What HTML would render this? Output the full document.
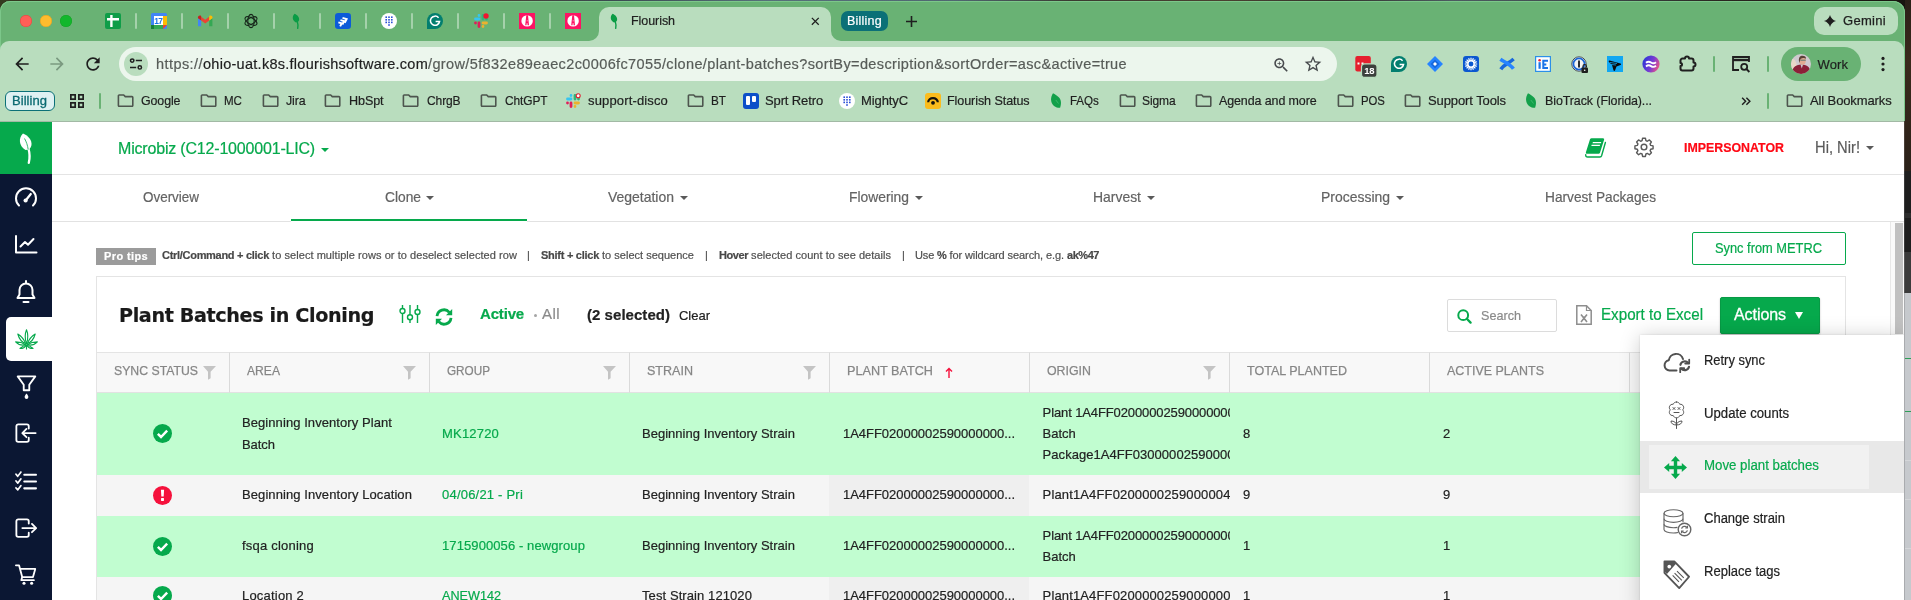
<!DOCTYPE html>
<html lang="en">
<head>
<meta charset="utf-8">
<title>Flourish</title>
<style>
*{box-sizing:border-box;margin:0;padding:0}
html,body{width:1911px;height:600px;overflow:hidden}
body{position:relative;background:#1c1a15;font-family:"Liberation Sans",sans-serif;color:#1f1f1f}
.abs,.t{position:absolute}
.t{white-space:nowrap;line-height:1;-webkit-text-stroke-width:.2px}
svg{position:absolute;overflow:visible}
/* ---------- browser chrome ---------- */
#desk-top{left:0;top:0;width:1911px;height:12px;background:linear-gradient(90deg,#343a20 0,#2d2c22 12%,#5a4a38 20%,#4a4436 26%,#3a4a50 32%,#56707a 40%,#4f6670 50%,#3a3a30 56%,#4a4030 64%,#33342c 70%,#4c5a60 76%,#3c4648 84%,#2a2620 90%,#17140f 100%)}
#desk-right{left:1905px;top:0;width:6px;height:600px;background:linear-gradient(180deg,#2a2018 0,#3a2a1c 60px,#2b2119 171px,#1e1e1e 171px,#1e1e1e 213px,#2d2d2d 213px,#2d2d2d 218px,#1e1e1e 218px,#1e1e1e 252px,#3b3b3b 252px,#3b3b3b 293px,#c6c9cd 293px,#c6c9cd 358px,#2e9e57 358px,#2e9e57 359px,#c6c9cd 359px,#c6c9cd 411px,#2e9e57 411px,#2e9e57 412px,#c6c9cd 412px,#c6c9cd 460px,#d4d6d9 460px,#d4d6d9 461px,#c6c9cd 461px,#c6c9cd 499px,#d4d6d9 499px,#d4d6d9 500px,#c6c9cd 500px,#c6c9cd 548px,#d4d6d9 548px,#d4d6d9 549px,#c6c9cd 549px);border-left:1px solid transparent}
#desk-edge{left:1904px;top:121px;width:1px;height:479px;background:linear-gradient(180deg,#4a4038 0,#4a4038 50px,#3a3a3a 50px,#3a3a3a 131px,#555 131px,#555 172px,#a9abae 172px);z-index:9}
#win{will-change:transform;left:0;top:1px;width:1905px;box-shadow:inset 0 1px 0 0 #7cc78a,inset -1px 0 0 0 #7cc78a,inset 1px 0 0 0 #7cc78a;height:599px;background:#69b274;border-radius:10px 12px 0 0;overflow:hidden}
#toolbar{left:0;top:40px;width:1904px;height:80px;background:#b9ddbe;border-radius:9px 9px 0 0}
#tab-active{left:599px;top:6px;width:232px;height:40px;background:#b9ddbe;border-radius:10px 10px 0 0}
.tabsep{width:2px;height:16px;top:12px;background:#a5d1ab;border-radius:1px}
#omni{left:119px;top:46px;width:1218px;height:34px;border-radius:17px;background:#ecf6ed}
.bm{font-size:13px;color:#1f1f1f;top:93px;letter-spacing:-.1px}
/* ---------- page ---------- */
#page{left:0;top:120px;width:1904px;height:480px;background:#fff;overflow:hidden}
#side{left:0;top:0;width:52px;height:480px;background:#0b1733}
#logo{left:0;top:1px;width:52px;height:52px;background:#06a94c}
#topline{left:0;top:0;width:1904px;height:1px;background:#a2b9a5;z-index:5}

/* page text */
.hd{left:52px;top:0;width:1852px;height:54px;border-bottom:1px solid #e4e4e4;background:#fff}
.nav{left:52px;top:54px;width:1852px;height:47px;border-bottom:1px solid #e2e2e2;background:#fff}
.nt{font-size:14.500px;color:#636363;top:69px}
.caret{width:0;height:0;border-left:4px solid transparent;border-right:4px solid transparent;border-top:4px solid #5a5a5a}
.tip{font-size:11px;color:#505050;top:129px}
.tip b{font-weight:700;color:#484848}
#card{left:96px;top:155px;width:1750px;height:400px;border:1px solid #e4e4e4;background:#fff}
.th{top:231px;height:41px;background:#f8f8f8;border-top:1px solid #e4e4e4;border-bottom:1px solid #e2e2e2;border-right:1px solid #dadada}
.tht{font-size:13px;color:#868686;top:243.300px;-webkit-text-stroke:.25px #868686}
.row{left:97px;width:1749px}
.sel{background:#c1fdd0}
.un{background:#f5f5f5}
.c{font-size:13px;color:#222;}
.mi{font-size:14px;color:#222}
.g{color:#06a94c}
</style>
</head>
<body>
<div id="desk-top" class="abs"></div>
<div id="desk-right" class="abs"></div>
<div id="desk-edge" class="abs"></div>
<div id="win" class="abs">
  <div id="toolbar" class="abs"></div>
  <div id="tab-active" class="abs"></div>
  <div id="omni" class="abs"></div>
  <!-- traffic lights -->
  <div class="abs" style="left:20px;top:14px;width:12px;height:12px;border-radius:50%;background:#fe5f57;box-shadow:inset 0 0 0 .5px #e2463f"></div>
  <div class="abs" style="left:40px;top:14px;width:12px;height:12px;border-radius:50%;background:#febc2e;box-shadow:inset 0 0 0 .5px #dfa123"></div>
  <div class="abs" style="left:60px;top:14px;width:12px;height:12px;border-radius:50%;background:#12b72c;box-shadow:inset 0 0 0 .5px #14a424"></div>
  <!-- tab separators -->
  <div class="abs tabsep" style="left:135px"></div><div class="abs tabsep" style="left:181px"></div><div class="abs tabsep" style="left:227px"></div><div class="abs tabsep" style="left:273px"></div><div class="abs tabsep" style="left:319px"></div><div class="abs tabsep" style="left:365px"></div><div class="abs tabsep" style="left:411px"></div><div class="abs tabsep" style="left:457px"></div><div class="abs tabsep" style="left:503px"></div><div class="abs tabsep" style="left:549px"></div>
  <!-- favicons (16px, centred y=20 in win coords) -->
  <svg style="left:105px;top:12px" width="16" height="16" viewBox="0 0 16 16"><rect width="16" height="16" rx="2" fill="#0f9d48"/><path d="M5.200 2h2.400v3h6.400v2.400H7.600V14H5.200V7.400H2V5h3.200z" fill="#fff"/></svg>
  <svg style="left:151px;top:12px" width="16" height="16" viewBox="0 0 16 16"><rect width="16" height="16" rx="1.5" fill="#4285f4"/><rect x="12" y="3" width="4" height="9" fill="#fbbc04"/><rect x="3" y="12" width="9" height="4" fill="#34a853"/><path d="M12 12h4l-4 4z" fill="#ea4335"/><rect x="0" y="12" width="3" height="4" fill="#188038"/><rect x="3" y="3" width="9" height="9" fill="#fff"/><text x="7.300" y="10.800" font-size="8.400" font-weight="700" text-anchor="middle" fill="#1a73e8" font-family="Liberation Sans,sans-serif" letter-spacing="-.5">17</text></svg>
  <svg style="left:197px;top:12px" width="16" height="16" viewBox="0 0 16 16"><path d="M1 13.200V5.200l3.200 2.400v5.600z" fill="#4285f4"/><path d="M12.200 13.200V7.600l3.200-2.400v8z" fill="#34a853"/><path d="M4.200 7.600 8.200 10.600l4-3V3.700l-4 3-4-3z" fill="#ea4335"/><path d="M1 5.200V4.300C1 2.700 2.800 1.900 4 2.800l.2.900v3.900z" fill="#c5221f"/><path d="M15.400 5.200V4.300c0-1.600-1.800-2.400-3-1.500l-.2.900v3.900z" fill="#fbbc04"/></svg>
  <svg style="left:243px;top:12px" width="16" height="16" viewBox="0 0 16 16" fill="none" stroke="#16251a" stroke-width="1.15"><ellipse cx="8" cy="8" rx="3.2" ry="6.6"/><ellipse cx="8" cy="8" rx="3.2" ry="6.6" transform="rotate(60 8 8)"/><ellipse cx="8" cy="8" rx="3.2" ry="6.6" transform="rotate(120 8 8)"/></svg>
  <svg style="left:289px;top:12px" width="16" height="16" viewBox="0 0 16 16"><path d="M5.600 .8C3 3.300 3 7.300 6.900 9.600c1.700 0 2.900-.9 3.200-2.500C10.600 4.500 8.600 2 5.600 .8z" fill="#0a9c45"/><path d="M8.300 8.600c.8 2.400 1 4.400.4 6.800" stroke="#0a9c45" stroke-width="1.400" fill="none" stroke-linecap="round"/></svg>
  <svg style="left:335px;top:12px" width="16" height="16" viewBox="0 0 16 16"><rect width="16" height="16" rx="3.200" fill="#0c5bd8"/><g fill="none" stroke="#fff" stroke-width="1.900" stroke-linejoin="miter" transform="rotate(-24 8 8)"><path d="M3.200 7.400l2.730 2.200l-2.730 2.200"/><path d="M6 6.200l2.980 2.400l-2.980 2.400"/><path d="M8.800 5l3.350 2.700l-3.350 2.700"/></g></svg>
  <svg style="left:381px;top:12px" width="16" height="16" viewBox="0 0 16 16"><circle cx="8" cy="8" r="8" fill="#fff"/><g fill="#2a4fd7"><rect x="4.4" y="3.4" width="1.600" height="1.600"/><rect x="7.2" y="3.4" width="1.600" height="1.600"/><rect x="10.0" y="3.4" width="1.600" height="1.600"/><rect x="4.4" y="6.0" width="1.600" height="1.600"/><rect x="7.2" y="6.0" width="1.600" height="1.600"/><rect x="10.0" y="6.0" width="1.600" height="1.600"/><rect x="4.4" y="8.6" width="1.600" height="1.600"/><rect x="7.2" y="8.6" width="1.600" height="1.600"/><rect x="10.0" y="8.6" width="1.600" height="1.600"/><rect x="7.200" y="11.200" width="1.600" height="1.600"/></g></svg>
  <svg style="left:427px;top:12px" width="16" height="16" viewBox="0 0 16 16"><path d="M8 0a8 8 0 1 1 0 16H0V8a8 8 0 0 1 8-8z" fill="#027e6f"/><path d="M11.600 4.800A4.600 4.600 0 1 0 12.600 8.400H8.600" stroke="#fff" stroke-width="1.500" fill="none"/></svg>
  <svg style="left:473px;top:12px" width="16" height="16" viewBox="0 0 16 16"><g stroke-width="2.800" stroke-linecap="round" fill="none"><path d="M6 2.500v.01M2.500 6h3.500" stroke="#36c5f0"/><path d="M10 2.500v3.500M13.500 6v.01" stroke="#2eb67d"/><path d="M10 10h3.500M10 13.500v.01" stroke="#ecb22e"/><path d="M6 10v3.500M2.500 10v.01" stroke="#e01e5a"/></g><circle cx="13" cy="3" r="2.700" fill="#f0142f"/></svg>
  <svg style="left:519px;top:12px" width="16" height="16" viewBox="0 0 16 16"><rect width="16" height="16" fill="#fd1363"/><circle cx="8.100" cy="7.900" r="5.700" fill="#fff"/><path d="M7.300 2.200h1.700l1 10h-1.400l-.3-2.200h-.5l-.3 2.200H6.200z" fill="#fd1363"/><rect x="7.750" y="7.400" width=".8" height=".9" fill="#fff"/></svg>
  <svg style="left:565px;top:12px" width="16" height="16" viewBox="0 0 16 16"><rect width="16" height="16" fill="#fd1363"/><circle cx="8.100" cy="7.900" r="5.700" fill="#fff"/><path d="M7.300 2.200h1.700l1 10h-1.400l-.3-2.200h-.5l-.3 2.200H6.200z" fill="#fd1363"/><rect x="7.750" y="7.400" width=".8" height=".9" fill="#fff"/></svg>
  <!-- active tab curves + content -->
  <svg style="left:589px;top:30px" width="10" height="10" viewBox="0 0 10 10"><path d="M10 0v10H0A10 10 0 0 0 10 0z" fill="#b9ddbe"/></svg>
  <svg style="left:831px;top:30px" width="10" height="10" viewBox="0 0 10 10"><path d="M0 0v10h10A10 10 0 0 1 0 0z" fill="#b9ddbe"/></svg>
  <svg style="left:607px;top:12px" width="16" height="16" viewBox="0 0 16 16"><path d="M5.600 .8C3 3.300 3 7.300 6.900 9.600c1.700 0 2.900-.9 3.200-2.500C10.600 4.500 8.600 2 5.600 .8z" fill="#0a9c45"/><path d="M8.300 8.600c.8 2.400 1 4.400.4 6.800" stroke="#0a9c45" stroke-width="1.400" fill="none" stroke-linecap="round"/></svg>
  <span class="t fit" style="left:631px;top:14px;font-size:12.500px;color:#1f1f1f;letter-spacing:-0.059px;--w:44px">Flourish</span>
  <svg style="left:810.700px;top:15.700px" width="8.600" height="8.600" viewBox="0 0 10 10"><path d="M1 1l8 8M9 1l-8 8" stroke="#1f1f1f" stroke-width="1.500" fill="none"/></svg>
  <div class="abs" style="left:841px;top:10px;width:47px;height:20px;border-radius:7px;background:#0b7077"></div>
  <span class="t fit" style="left:847px;top:14px;font-size:12.500px;color:#fff;letter-spacing:0.234px;--w:35px">Billing</span>
  <svg style="left:906px;top:15px" width="11" height="11" viewBox="0 0 11 11"><path d="M5.500 0v11M0 5.500h11" stroke="#1f1f1f" stroke-width="1.600" fill="none"/></svg>
  <!-- gemini -->
  <div class="abs" style="left:1814px;top:6px;width:84px;height:28px;border-radius:10px;background:#b9ddbe"></div>
  <svg style="left:1824px;top:14px" width="12" height="12" viewBox="0 0 12 12"><path d="M6 0Q7.300 4.700 12 6 7.300 7.300 6 12 4.700 7.300 0 6 4.700 4.700 6 0z" fill="#1f1f1f"/></svg>
  <span class="t fit" style="left:1843px;top:13px;font-size:13px;color:#1f1f1f;-webkit-text-stroke:.25px #1f1f1f;letter-spacing:0.302px;--w:43px">Gemini</span>
  <!-- nav buttons (win coords: y centre 63) -->
  <svg style="left:12px;top:53px" width="20" height="20" viewBox="0 0 24 24"><path d="M20 11H7.830l5.590-5.590L12 4l-8 8 8 8 1.410-1.410L7.830 13H20v-2z" fill="#1f1f1f"/></svg>
  <svg style="left:47px;top:53px" width="20" height="20" viewBox="0 0 24 24"><path d="M12 4l-1.410 1.410L16.170 11H4v2h12.170l-5.580 5.590L12 20l8-8z" fill="#7b9a80"/></svg>
  <svg style="left:83px;top:53px" width="20" height="20" viewBox="0 0 24 24"><path d="M17.650 6.350C16.200 4.900 14.210 4 12 4c-4.420 0-7.990 3.580-7.990 8s3.570 8 7.990 8c3.730 0 6.840-2.550 7.730-6h-2.080c-.82 2.330-3.040 4-5.650 4-3.310 0-6-2.690-6-6s2.690-6 6-6c1.660 0 3.140.69 4.220 1.780L13 11h7V4l-2.350 2.350z" fill="#1f1f1f"/></svg>
  <!-- omnibox contents -->
  <div class="abs" style="left:124px;top:51px;width:24px;height:24px;border-radius:50%;background:#b9ddbe"></div>
  <svg style="left:129px;top:56px" width="14" height="14" viewBox="0 0 14 14" fill="none" stroke="#1f1f1f" stroke-width="1.500"><circle cx="3.200" cy="3.600" r="1.700"/><path d="M6.800 3.600H13"/><circle cx="10.800" cy="10.400" r="1.700"/><path d="M1 10.400H7.200"/></svg>
  <span class="t" style="left:156px;top:56px;font-size:14.500px;color:#575c58"><span class="fit" style="letter-spacing:0.434px;--w:47px">https://</span><span class="fit" style="color:#1f1f1f;letter-spacing:0.273px;--w:225px">ohio-uat.k8s.flourishsoftware.com</span><span class="fit" style="letter-spacing:0.379px;--w:699px">/grow/5f832e89eaec2c0006fc7055/clone/plant-batches?sortBy=description&amp;sortOrder=asc&amp;active=true</span></span>
  <svg style="left:1272px;top:54.500px" width="18.500" height="18.500" viewBox="0 0 24 24"><path d="M15.500 14h-.79l-.28-.27C15.410 12.590 16 11.110 16 9.500 16 5.910 13.090 3 9.500 3S3 5.910 3 9.500 5.910 16 9.500 16c1.610 0 3.090-.59 4.230-1.570l.27.280v.79l5 4.990L20.490 19l-4.990-5zm-6 0C7.010 14 5 11.990 5 9.500S7.010 5 9.500 5 14 7.010 14 9.500 11.990 14 9.500 14zM12 10h-2v2H9v-2H7V9h2V7h1v2h2v1z" fill="#474a4d"/></svg>
  <svg style="left:1303px;top:53px" width="20" height="20" viewBox="0 0 24 24"><path d="M22 9.240l-7.190-.62L12 2 9.190 8.630 2 9.240l5.460 4.730L5.820 21 12 17.270 18.180 21l-1.630-7.030L22 9.240zM12 15.400l-3.760 2.270 1-4.280-3.320-2.880 4.380-.38L12 6.100l1.710 4.040 4.380.38-3.320 2.880 1 4.280L12 15.400z" fill="#474a4d"/></svg>
  <!-- extensions -->
  <svg style="left:1354px;top:54px" width="26" height="24" viewBox="0 0 26 24"><rect x="1.300" y=".9" width="15.500" height="15.500" rx="2" fill="#e5202e"/><path d="M3.500 8.500h2M7.500 8.500h2" stroke="#fff" stroke-width="1.800"/><rect x="7.500" y="8.900" width="15.500" height="13.500" rx="3.200" fill="#3c403d" stroke="#b9ddbe" stroke-width="1.200"/><text x="15.300" y="19" font-size="9.500" font-weight="700" text-anchor="middle" fill="#fff" font-family="Liberation Sans,sans-serif" letter-spacing="-.3">18</text></svg>
  <svg style="left:1391px;top:55px" width="16" height="16" viewBox="0 0 16 16"><path d="M8 0a8 8 0 1 1 0 16H0V8a8 8 0 0 1 8-8z" fill="#027e6f"/><path d="M11.600 4.800A4.600 4.600 0 1 0 12.600 8.400H8.600" stroke="#fff" stroke-width="1.500" fill="none"/></svg>
  <svg style="left:1427px;top:55px" width="16" height="16" viewBox="0 0 16 16"><path d="M8 0l8 8-8 8-8-8z" fill="#2684ff"/><path d="M8 3.500 12.500 8 8 12.500 3.500 8z" fill="#1868db"/><path d="M8 6l2 2-2 2-2-2z" fill="#fff"/></svg>
  <svg style="left:1463px;top:55px" width="16" height="16" viewBox="0 0 16 16"><rect width="16" height="16" rx="3" fill="#0b57d0"/><circle cx="8" cy="8" r="3.200" fill="none" stroke="#fff" stroke-width="1.500"/><g stroke="#fff" stroke-width="1.200"><path d="M8 1.800v2.600M8 11.600v2.600M1.800 8h2.600M11.600 8h2.600M3.600 3.600l1.900 1.900M10.500 10.500l1.900 1.900M12.400 3.600l-1.900 1.900M5.500 10.500l-1.900 1.900M5.600 2.300l1 2.400M9.400 11.300l1 2.400M13.700 5.600l-2.400 1M4.700 9.400l-2.400 1M10.400 2.300l-1 2.400M6.600 11.300l-1 2.400M13.700 10.400l-2.400-1M4.700 6.600l-2.400-1"/></g></svg>
  <svg style="left:1499px;top:55px" width="16" height="16" viewBox="0 0 16 16" fill="none" stroke-width="3.600"><path d="M1.800 13.200C5 8.500 9.500 7.500 14.600 3" stroke="#1868db"/><path d="M1.400 3.200C6 6.500 11 8 14.400 12.800" stroke="#2684ff"/></svg>
  <svg style="left:1535px;top:55px" width="16" height="16" viewBox="0 0 16 16"><rect x=".6" y=".6" width="14.800" height="14.800" fill="#fff" stroke="#2b8fe8" stroke-width="1.200"/><circle cx="4.600" cy="4.200" r="1.300" fill="#e8253a"/><rect x="3.500" y="6.200" width="2.200" height="6.600" fill="#1b74e8"/><path d="M13 4.800H8.300v7.200H13M8.300 8.400h3" stroke="#1b74e8" stroke-width="2" fill="none"/></svg>
  <svg style="left:1570px;top:54px" width="20" height="20" viewBox="0 0 20 20"><circle cx="9" cy="9" r="7.200" fill="#fff" stroke="#4a4f55" stroke-width="1"/><circle cx="9" cy="9" r="5.600" fill="#f4f4f4" stroke="#1a66d6" stroke-width="1.800"/><rect x="8" y="5.200" width="2" height="7.600" rx="1" fill="#2a2f36"/><rect x="11.500" y="12.500" width="6.500" height="5.500" rx="1" fill="#1f1f1f"/><path d="M13 12.500v-1.300a1.700 1.700 0 0 1 3.400 0v1.300" stroke="#1f1f1f" stroke-width="1.200" fill="none"/><circle cx="14.700" cy="15.200" r=".8" fill="#fff"/></svg>
  <svg style="left:1607px;top:55px" width="16" height="16" viewBox="0 0 16 16"><rect width="16" height="16" fill="#12a7f2"/><path d="M2.500 4.500 13.500 7.500c.8.200.8 1.200 0 1.500L9.500 10.500 8 14.500c-.3.700-1.200.6-1.400 0L5 9 2 6c-.6-.6-.2-1.700.5-1.500z" fill="#0b0b0b"/><path d="M3 6.500l7 1M4 8.500l5 .5" stroke="#12a7f2" stroke-width=".8"/></svg>
  <svg style="left:1642px;top:54px" width="18" height="18" viewBox="0 0 18 18"><defs><linearGradient id="pg" x1="0" y1=".3" x2="1" y2=".7"><stop offset="0" stop-color="#2a35d8"/><stop offset=".55" stop-color="#7a3bd2"/><stop offset="1" stop-color="#f4567e"/></linearGradient></defs><circle cx="9" cy="9" r="8.600" fill="url(#pg)"/><path d="M4 7.800c1.800-1.500 3.200-1.500 5-.3s3.200 1.200 5-.3M4 11.400c1.800-1.500 3.200-1.500 5-.3s3.200 1.200 5-.3" stroke="#fff" stroke-width="1.900" fill="none"/></svg>
  <svg style="left:1677.500px;top:52px" width="20" height="20" viewBox="0 0 20 20" fill="none" stroke="#1f1f1f" stroke-width="2" stroke-linejoin="round"><path d="M4.500 5.500H7A2 2 0 0 1 11 5.500H13.500A2 2 0 0 1 15.500 7.500V9.500A2 2 0 0 1 15.500 13.500V15.500A2 2 0 0 1 13.500 17.500H4.500A2 2 0 0 1 2.500 15.500V13A1.500 1.500 0 0 0 2.500 10V7.500A2 2 0 0 1 4.500 5.500Z"/></svg>
  <div class="abs" style="left:1713px;top:55px;width:2px;height:16px;background:#69b274;border-radius:1px"></div>
  <svg style="left:1731px;top:54px" width="20" height="18" viewBox="0 0 20 18" fill="none" stroke="#1f1f1f" stroke-width="1.800"><path d="M8 15H2V2h16v5"/><path d="M2 5h16" stroke-width="2.400"/><circle cx="13.200" cy="11.800" r="3"/><path d="M15.400 14l3 3"/></svg>
  <div class="abs" style="left:1767px;top:55px;width:2px;height:16px;background:#69b274;border-radius:1px"></div>
  <!-- profile pill -->
  <div class="abs" style="left:1781px;top:46px;width:80px;height:34px;border-radius:17px;background:#69b274"></div>
  <svg style="left:1791px;top:53px" width="20" height="20" viewBox="0 0 20 20"><defs><clipPath id="avc"><circle cx="10" cy="10" r="10"/></clipPath></defs><g clip-path="url(#avc)"><rect width="20" height="20" fill="#cfc9cf"/><path d="M0 4c2 0 5 2 6 8L0 16z" fill="#e9d6c8"/><path d="M1 20c0-6 3-9.500 9.500-9.500S19.500 14 19.500 20z" fill="#8c2038"/><path d="M9.500 10.500l1.300 4 1.200-4z" fill="#c9cdd6"/><ellipse cx="11.500" cy="6.500" rx="3.300" ry="4.200" fill="#e2ab92"/><path d="M8 7.500C7.500 3.500 9 1.800 11.500 1.800c2.200 0 3.600 1.200 3.600 3-1.500-1-3.800-1-5.300 0C9.200 5.600 8.800 6.500 8.600 9z" fill="#5a4038"/><path d="M9.300 5.600h5.400v1.300H9.300z" fill="#6d7f78" opacity=".8"/></g></svg>
  <span class="t fit" style="left:1817.500px;top:56.700px;font-size:13px;color:#1f1f1f;letter-spacing:0.098px;--w:30.500px">Work</span>
  <svg style="left:1881px;top:54px" width="4" height="18" viewBox="0 0 4 18"><circle cx="2" cy="3.400" r="1.600" fill="#1f1f1f"/><circle cx="2" cy="9" r="1.600" fill="#1f1f1f"/><circle cx="2" cy="14.600" r="1.600" fill="#1f1f1f"/></svg>
  <!-- bookmarks bar (win coords: y centre 99.5) -->
  <div class="abs" style="left:5px;top:90px;width:50px;height:20px;border-radius:6px;background:#dff1f2;border:1px solid #0b7077"></div>
  <span class="t fit" style="left:12px;top:93px;font-size:13px;color:#0b6a72;-webkit-text-stroke:.3px #0b6a72;letter-spacing:0.045px;--w:35px">Billing</span>
  <svg style="left:70px;top:93px" width="14" height="14" viewBox="0 0 14 14" fill="none" stroke="#1f1f1f" stroke-width="1.700"><rect x=".85" y=".85" width="4.300" height="4.300"/><rect x="8.850" y=".85" width="4.300" height="4.300"/><rect x=".85" y="8.850" width="4.300" height="4.300"/><rect x="8.850" y="8.850" width="4.300" height="4.300"/></svg>
  <div class="abs" style="left:99px;top:92px;width:2px;height:16px;background:#69b274;border-radius:1px"></div>
  <svg style="left:115.9px;top:90.400px" width="19.200" height="19.200" viewBox="0 0 24 24"><path d="M9.170 6l2 2H20v10H4V6h5.170M10 4H4c-1.100 0-1.990.9-1.990 2L2 18c0 1.100.9 2 2 2h16c1.100 0 2-.9 2-2V8c0-1.100-.9-2-2-2h-8l-2-2z" fill="#4d554e"/></svg><span class="t bm fit" style="left:141px;transform:scaleX(0.9542);transform-origin:0 0;--w:40px">Google</span>
  <svg style="left:198.9px;top:90.400px" width="19.200" height="19.200" viewBox="0 0 24 24"><path d="M9.170 6l2 2H20v10H4V6h5.170M10 4H4c-1.100 0-1.990.9-1.990 2L2 18c0 1.100.9 2 2 2h16c1.100 0 2-.9 2-2V8c0-1.100-.9-2-2-2h-8l-2-2z" fill="#4d554e"/></svg><span class="t bm fit" style="left:224px;transform:scaleX(0.8903);transform-origin:0 0;--w:18px">MC</span>
  <svg style="left:260.9px;top:90.400px" width="19.200" height="19.200" viewBox="0 0 24 24"><path d="M9.170 6l2 2H20v10H4V6h5.170M10 4H4c-1.100 0-1.990.9-1.990 2L2 18c0 1.100.9 2 2 2h16c1.100 0 2-.9 2-2V8c0-1.100-.9-2-2-2h-8l-2-2z" fill="#4d554e"/></svg><span class="t bm fit" style="left:286px;transform:scaleX(0.9545);transform-origin:0 0;--w:20px">Jira</span>
  <svg style="left:322.9px;top:90.400px" width="19.200" height="19.200" viewBox="0 0 24 24"><path d="M9.170 6l2 2H20v10H4V6h5.170M10 4H4c-1.100 0-1.990.9-1.990 2L2 18c0 1.100.9 2 2 2h16c1.100 0 2-.9 2-2V8c0-1.100-.9-2-2-2h-8l-2-2z" fill="#4d554e"/></svg><span class="t bm fit" style="left:349px;transform:scaleX(0.9684);transform-origin:0 0;--w:35px">HbSpt</span>
  <svg style="left:400.9px;top:90.400px" width="19.200" height="19.200" viewBox="0 0 24 24"><path d="M9.170 6l2 2H20v10H4V6h5.170M10 4H4c-1.100 0-1.990.9-1.990 2L2 18c0 1.100.9 2 2 2h16c1.100 0 2-.9 2-2V8c0-1.100-.9-2-2-2h-8l-2-2z" fill="#4d554e"/></svg><span class="t bm fit" style="left:427px;transform:scaleX(0.9224);transform-origin:0 0;--w:34px">ChrgB</span>
  <svg style="left:478.9px;top:90.400px" width="19.200" height="19.200" viewBox="0 0 24 24"><path d="M9.170 6l2 2H20v10H4V6h5.170M10 4H4c-1.100 0-1.990.9-1.990 2L2 18c0 1.100.9 2 2 2h16c1.100 0 2-.9 2-2V8c0-1.100-.9-2-2-2h-8l-2-2z" fill="#4d554e"/></svg><span class="t bm fit" style="left:505px;transform:scaleX(0.9155);transform-origin:0 0;--w:43px">ChtGPT</span>
  <svg style="left:685.9px;top:90.400px" width="19.200" height="19.200" viewBox="0 0 24 24"><path d="M9.170 6l2 2H20v10H4V6h5.170M10 4H4c-1.100 0-1.990.9-1.990 2L2 18c0 1.100.9 2 2 2h16c1.100 0 2-.9 2-2V8c0-1.100-.9-2-2-2h-8l-2-2z" fill="#4d554e"/></svg><span class="t bm fit" style="left:711px;transform:scaleX(0.9023);transform-origin:0 0;--w:15px">BT</span>
  <svg style="left:1117.9px;top:90.400px" width="19.200" height="19.200" viewBox="0 0 24 24"><path d="M9.170 6l2 2H20v10H4V6h5.170M10 4H4c-1.100 0-1.990.9-1.990 2L2 18c0 1.100.9 2 2 2h16c1.100 0 2-.9 2-2V8c0-1.100-.9-2-2-2h-8l-2-2z" fill="#4d554e"/></svg><span class="t bm fit" style="left:1142px;transform:scaleX(0.9224);transform-origin:0 0;--w:34px">Sigma</span>
  <svg style="left:1193.9px;top:90.400px" width="19.200" height="19.200" viewBox="0 0 24 24"><path d="M9.170 6l2 2H20v10H4V6h5.170M10 4H4c-1.100 0-1.990.9-1.990 2L2 18c0 1.100.9 2 2 2h16c1.100 0 2-.9 2-2V8c0-1.100-.9-2-2-2h-8l-2-2z" fill="#4d554e"/></svg><span class="t bm fit" style="left:1219px;transform:scaleX(0.9578);transform-origin:0 0;--w:99px">Agenda and more</span>
  <svg style="left:1335.9px;top:90.400px" width="19.200" height="19.200" viewBox="0 0 24 24"><path d="M9.170 6l2 2H20v10H4V6h5.170M10 4H4c-1.100 0-1.990.9-1.990 2L2 18c0 1.100.9 2 2 2h16c1.100 0 2-.9 2-2V8c0-1.100-.9-2-2-2h-8l-2-2z" fill="#4d554e"/></svg><span class="t bm fit" style="left:1361px;transform:scaleX(0.8737);transform-origin:0 0;--w:24px">POS</span>
  <svg style="left:1402.9px;top:90.400px" width="19.200" height="19.200" viewBox="0 0 24 24"><path d="M9.170 6l2 2H20v10H4V6h5.170M10 4H4c-1.100 0-1.990.9-1.990 2L2 18c0 1.100.9 2 2 2h16c1.100 0 2-.9 2-2V8c0-1.100-.9-2-2-2h-8l-2-2z" fill="#4d554e"/></svg><span class="t bm fit" style="left:1428px;letter-spacing:-0.097px;--w:78px">Support Tools</span>
  <svg style="left:1784.9px;top:90.400px" width="19.200" height="19.200" viewBox="0 0 24 24"><path d="M9.170 6l2 2H20v10H4V6h5.170M10 4H4c-1.100 0-1.990.9-1.990 2L2 18c0 1.100.9 2 2 2h16c1.100 0 2-.9 2-2V8c0-1.100-.9-2-2-2h-8l-2-2z" fill="#4d554e"/></svg><span class="t bm fit" style="left:1810px;letter-spacing:-0.121px;--w:81.500px">All Bookmarks</span>
  <svg style="left:565px;top:92px" width="16" height="16" viewBox="0 0 16 16"><g stroke-width="2.800" stroke-linecap="round" fill="none"><path d="M6 2.500v.01M2.500 6h3.500" stroke="#36c5f0"/><path d="M10 2.500v3.500M13.500 6v.01" stroke="#2eb67d"/><path d="M10 10h3.500M10 13.500v.01" stroke="#ecb22e"/><path d="M6 10v3.500M2.500 10v.01" stroke="#e01e5a"/></g><circle cx="13.200" cy="2.800" r="2" fill="#fff" stroke="#e01e2f" stroke-width="1.100"/></svg><span class="t bm fit" style="left:588px;letter-spacing:0.150px;--w:80px">support-disco</span>
  <svg style="left:743px;top:92px" width="16" height="16" viewBox="0 0 16 16"><rect width="16" height="16" rx="3" fill="#0c4fc9"/><rect x="3" y="3" width="4" height="9" rx="1" fill="#fff"/><rect x="9" y="3" width="4" height="6" rx="1" fill="#fff"/></svg><span class="t bm fit" style="left:765px;letter-spacing:-0.125px;--w:58px">Sprt Retro</span>
  <svg style="left:839px;top:92px" width="16" height="16" viewBox="0 0 16 16"><circle cx="8" cy="8" r="8" fill="#fff"/><g fill="#2a4fd7"><rect x="4.4" y="3.4" width="1.600" height="1.600"/><rect x="7.2" y="3.4" width="1.600" height="1.600"/><rect x="10.0" y="3.4" width="1.600" height="1.600"/><rect x="4.4" y="6.0" width="1.600" height="1.600"/><rect x="7.2" y="6.0" width="1.600" height="1.600"/><rect x="10.0" y="6.0" width="1.600" height="1.600"/><rect x="4.4" y="8.6" width="1.600" height="1.600"/><rect x="7.2" y="8.6" width="1.600" height="1.600"/><rect x="10.0" y="8.6" width="1.600" height="1.600"/><rect x="7.200" y="11.200" width="1.600" height="1.600"/></g></svg><span class="t bm fit" style="left:861px;letter-spacing:-0.098px;--w:47px">MightyC</span>
  <svg style="left:925px;top:92px" width="16" height="16" viewBox="0 0 16 16"><rect width="16" height="16" rx="3" fill="#fbbc1d"/><path d="M3.200 9.200a4.800 4 0 0 1 9.600 0" fill="none" stroke="#16130d" stroke-width="2.200"/><circle cx="8" cy="9.800" r="1.900" fill="#16130d"/></svg><span class="t bm fit" style="left:947px;transform:scaleX(0.9688);transform-origin:0 0;--w:84px">Flourish Status</span>
  <svg style="left:1048px;top:92px" width="16" height="16" viewBox="0 0 16 16"><path d="M5 .2C2.500 4 2 9 6 13c2 1.500 4.500 2 6.100 1.800C13.500 11 13.500 6.500 10.500 4 9 2.500 7 1.200 5 .2z" fill="#13a04a"/><path d="M7.800 7l2.700 3.500" stroke="#4cc27a" stroke-width=".7" fill="none"/></svg><span class="t bm fit" style="left:1070px;transform:scaleX(0.8919);transform-origin:0 0;--w:29px">FAQs</span>
  <svg style="left:1523px;top:92px" width="16" height="16" viewBox="0 0 16 16"><path d="M5 .2C2.500 4 2 9 6 13c2 1.500 4.500 2 6.100 1.800C13.500 11 13.500 6.500 10.500 4 9 2.500 7 1.200 5 .2z" fill="#13a04a"/><path d="M7.800 7l2.700 3.500" stroke="#4cc27a" stroke-width=".7" fill="none"/></svg><span class="t bm fit" style="left:1545px;transform:scaleX(0.9590);transform-origin:0 0;--w:109px">BioTrack (Florida)...</span>
  <svg style="left:1740.500px;top:95.500px" width="10" height="8.500" viewBox="0 0 12 11" fill="none" stroke="#1f1f1f" stroke-width="1.900"><path d="M1 1l4.500 4.500L1 10M6.500 1 11 5.500 6.500 10"/></svg>
  <div class="abs" style="left:1767px;top:92px;width:2px;height:16px;background:#69b274;border-radius:1px"></div>
  <!--CHROME-->
  <div id="page" class="abs">
    <div id="side" class="abs"><div id="logo" class="abs"></div></div>
    <div id="topline" class="abs"></div>
    <!-- sidebar icons (page coords = screen-121) -->
    <svg style="left:19px;top:12px" width="14" height="31" viewBox="0 0 14 31"><path d="M4 .5C-.5 5-.5 12.500 6.500 17c3 0 5.300-1.600 5.900-4.600C13.300 7.500 9.500 2.700 4 .5z" fill="#fff"/><path d="M9.300 15c1.500 5 1.800 9.500.5 14.800" stroke="#fff" stroke-width="2.300" fill="none" stroke-linecap="round"/><path d="M9.200 16.500C8.500 12 7.500 9 5.500 5.500" stroke="#06a94c" stroke-width=".8" fill="none"/></svg>
    <svg style="left:14px;top:65px" width="24" height="22" viewBox="0 0 24 22" fill="none" stroke="#fff" stroke-width="2" stroke-linecap="round"><path d="M5 19.500A10 10 0 1 1 19 19.500"/><path d="M11.800 14.300l5-6.300" stroke-width="2.200"/><circle cx="11.600" cy="14.500" r="2.100" fill="#fff" stroke="none"/></svg>
    <svg style="left:15px;top:114px" width="23" height="19" viewBox="0 0 23 19" fill="none" stroke="#fff" stroke-width="2" stroke-linecap="round" stroke-linejoin="round"><path d="M1 1v16.500h20.500"/><path d="M5.500 11.500l4.500-4.500 3 2.800 5.500-5.800"/></svg>
    <svg style="left:16px;top:159px" width="20" height="24" viewBox="0 0 20 24" fill="none" stroke="#fff" stroke-width="2" stroke-linecap="round" stroke-linejoin="round"><path d="M10 1v1.500"/><path d="M3.500 10a6.500 6.500 0 0 1 13 0v4.500l2 3.500h-17l2-3.500z"/><path d="M7.500 22h5"/></svg>
    <div class="abs" style="left:6px;top:196px;width:46px;height:44px;border-radius:5px 0 0 5px;background:#fff"></div>
    <svg style="left:15px;top:208px" width="23" height="22" viewBox="0 0 23 22" fill="#fff" stroke="#06a94c" stroke-width="1.100" stroke-linejoin="round"><path d="M2.800 5c3.400 2 6 5 7.900 9.600C6.500 13 4 9.600 2.800 5z"/><path d="M20.200 5c-3.400 2-6 5-7.900 9.600C16.500 13 19 9.600 20.200 5z"/><path d="M.6 12.800c3.800.1 7.100 1 10.200 3-3.900.9-7.300 0-10.200-3z"/><path d="M22.400 12.800c-3.800.1-7.100 1-10.200 3 3.900.9 7.300 0 10.200-3z"/><path d="M5 19.500c1.700-1.800 3.800-2.900 6.200-3.300-1.100 2.200-3.200 3.300-6.200 3.300z"/><path d="M18 19.500c-1.700-1.800-3.800-2.900-6.200-3.300 1.100 2.200 3.200 3.300 6.200 3.300z"/><path d="M11.500 .8c1.700 4 1.700 9 0 14.200-1.700-5.200-1.700-10.200 0-14.200z"/><path d="M11.500 16v4.500" fill="none"/></svg>
    <svg style="left:15.500px;top:254px" width="21" height="25" viewBox="0 0 22 27" fill="none" stroke="#fff" stroke-width="2" stroke-linejoin="round"><path d="M1.500 1.500h19l-6.500 9v6h-6v-6z"/><path d="M11 20c1.300 1.800 2 2.800 2 3.800a2 2 0 0 1-4 0c0-1 .7-2 2-3.800z" fill="#fff" stroke="none"/></svg>
    <svg style="left:15px;top:302px" width="22" height="20.200" viewBox="0 0 24 22" fill="none" stroke="#fff" stroke-width="2" stroke-linecap="round" stroke-linejoin="round"><path d="M15 6V3.500a2 2 0 0 0-2-2H3.500a2 2 0 0 0-2 2v15a2 2 0 0 0 2 2H13a2 2 0 0 0 2-2V16"/><path d="M22.500 11h-14"/><path d="M12.500 6.500 8 11l4.500 4.500"/></svg>
    <svg style="left:15px;top:350px" width="22" height="21" preserveAspectRatio="none" viewBox="0 0 24 20" fill="none" stroke="#fff" stroke-width="2" stroke-linecap="round" stroke-linejoin="round"><path d="M10 3.500h13M10 10h13M10 16.500h13"/><path d="M1 3l2 2 3.500-4M1 9.500l2 2 3.500-4M1 16l2 2 3.500-4" stroke-width="1.700"/></svg>
    <svg style="left:15px;top:397px" width="22" height="20.200" viewBox="0 0 24 22" fill="none" stroke="#fff" stroke-width="2" stroke-linecap="round" stroke-linejoin="round"><path d="M15 6V3.500a2 2 0 0 0-2-2H3.500a2 2 0 0 0-2 2v15a2 2 0 0 0 2 2H13a2 2 0 0 0 2-2V16"/><path d="M8 11h14.500"/><path d="M18.500 6.500 23 11l-4.500 4.500"/></svg>
    <svg style="left:15px;top:443px" width="22.500" height="21.600" viewBox="0 0 25 24" fill="none" stroke="#fff" stroke-width="2" stroke-linecap="round" stroke-linejoin="round"><path d="M1 1.500h3.500l3.500 13h12l2.500-9H6"/><path d="M8 14.500 7 18h14"/><circle cx="10" cy="21.500" r="1.700" fill="#fff" stroke="none"/><circle cx="18.500" cy="21.500" r="1.700" fill="#fff" stroke="none"/></svg>
    <!-- header -->
    <div class="abs hd"></div>
    <span class="t fit" style="left:118px;top:20px;font-size:16px;color:#06a94c;letter-spacing:-0.187px;--w:197px">Microbiz (C12-1000001-LIC)</span>
    <div class="abs caret" style="left:321px;top:27px;border-top-color:#06a94c"></div>
    <svg style="left:1585px;top:17px" width="21" height="20" viewBox="0 0 21 20"><path d="M6.700 .2H18a1.200 1.200 0 0 1 1.100 1.600L15 14.800a1.500 1.500 0 0 1-1.400 1H2a1.200 1.200 0 0 1-1.100-1.600L5 1.200a1.800 1.800 0 0 1 1.700-1z" fill="#06a94c"/><path d="M7.900 3.900h8.400l-.4 1.300H7.500zM6.700 6.800h8.400l-.4 1.300H6.300z" fill="#fff"/><path d="M20.400 4.500 16.600 17.800Q16.200 19 15 19H2.600Q.6 19 .7 16.800" fill="none" stroke="#06a94c" stroke-width="1.400" stroke-linecap="round"/></svg>
    <svg style="left:1634.200px;top:16.300px" width="20" height="20" viewBox="0 0 24 24" fill="none" stroke="#5a5a5a" stroke-width="1.700" stroke-linejoin="round"><circle cx="12" cy="12" r="3.400"/><path d="M10.300 1.500h3.400l.6 2.900 1.700.7 2.500-1.600 2.400 2.400-1.600 2.500.7 1.700 2.900.6v3.400l-2.900.6-.7 1.700 1.600 2.500-2.400 2.400-2.500-1.600-1.700.7-.6 2.900h-3.400l-.6-2.900-1.700-.7-2.500 1.600-2.400-2.400 1.600-2.500-.7-1.700-2.900-.6v-3.400l2.900-.6.700-1.700-1.600-2.500 2.400-2.400 2.500 1.600 1.700-.7z"/></svg>
    <span class="t fit" style="left:1684px;top:19.700px;font-size:13.500px;font-weight:700;color:#ff0814;transform:scaleX(0.9173);transform-origin:0 0;--w:100px">IMPERSONATOR</span>
    <span class="t fit" style="left:1815px;top:19px;font-size:16px;color:#5a5a5a;transform:scaleX(0.9204);transform-origin:0 0;--w:45px">Hi, Nir!</span>
    <div class="abs caret" style="left:1866px;top:25px"></div>
    <!-- nav tabs -->
    <div class="abs nav"></div>
    <div class="abs" style="left:291px;top:98px;width:236px;height:2px;background:#06a94c"></div><div class="abs" style="left:291px;top:100px;width:236px;height:1px;background:#fff"></div>
    <span class="t nt fit" style="left:143px;transform:scaleX(0.9266);transform-origin:0 0;--w:56px">Overview</span>
    <span class="t nt fit" style="left:385px;transform:scaleX(0.9501);transform-origin:0 0;--w:36px">Clone</span><div class="abs caret" style="left:426px;top:75px"></div>
    <span class="t nt fit" style="left:608px;transform:scaleX(0.9628);transform-origin:0 0;--w:66px">Vegetation</span><div class="abs caret" style="left:680px;top:75px"></div>
    <span class="t nt fit" style="left:849px;transform:scaleX(0.9545);transform-origin:0 0;--w:60px">Flowering</span><div class="abs caret" style="left:915px;top:75px"></div>
    <span class="t nt fit" style="left:1093px;transform:scaleX(0.9606);transform-origin:0 0;--w:48px">Harvest</span><div class="abs caret" style="left:1147px;top:75px"></div>
    <span class="t nt fit" style="left:1321px;transform:scaleX(0.9619);transform-origin:0 0;--w:69px">Processing</span><div class="abs caret" style="left:1396px;top:75px"></div>
    <span class="t nt fit" style="left:1545px;transform:scaleX(0.9433);transform-origin:0 0;--w:111px">Harvest Packages</span>
    <!-- scrollbar -->
    <div class="abs" style="left:1890px;top:101px;width:14px;height:380px;background:#fafafa;border-left:1px solid #e8e8e8"></div>
    <div class="abs" style="left:1894.500px;top:102px;width:8px;height:111px;background:#c1c1c1"></div>
    <!-- pro tips -->
    <div class="abs" style="left:96px;top:127px;width:60px;height:17px;background:#9b9b9b"></div>
    <span class="t fit" style="left:104px;top:130px;font-size:11px;font-weight:700;color:#fff;letter-spacing:0.381px;--w:44px">Pro tips</span>
    <span class="t tip"  style="left:162px"><b class="fit" style="letter-spacing:-0.290px;--w:107px">Ctrl/Command + click</b><span class="fit" style="letter-spacing:0.054px;--w:248px"> to select multiple rows or to deselect selected row</span></span>
    <span class="t tip fit" style="left:527px;letter-spacing:1.141px;--w:4px">|</span>
    <span class="t tip" style="left:541px"><b class="fit" style="letter-spacing:-0.266px;--w:58px">Shift + click</b><span class="fit" style="letter-spacing:0.011px;--w:95px"> to select sequence</span></span>
    <span class="t tip fit" style="left:705px;letter-spacing:1.141px;--w:4px">|</span>
    <span class="t tip" style="left:719px"><b class="fit" style="letter-spacing:-0.438px;--w:29px">Hover</b><span class="fit" style="letter-spacing:0.037px;--w:143px"> selected count to see details</span></span>
    <span class="t tip fit" style="left:902px;letter-spacing:1.141px;--w:4px">|</span>
    <span class="t tip" style="left:915px"><span class="fit" style="letter-spacing:-0.156px;--w:22px">Use </span><b class="fit" style="letter-spacing:-0.281px;--w:9.500px">%</b><span class="fit" style="letter-spacing:-0.089px;--w:120.500px"> for wildcard search, e.g. </span><b class="fit" style="letter-spacing:-0.453px;--w:32px">ak%47</b></span>
    <div class="abs" style="left:1692px;top:111px;width:154px;height:33px;border:1px solid #06a94c;border-radius:2px;background:#fff"></div>
    <span class="t fit" style="left:1715px;top:120px;font-size:14px;color:#06a94c;transform:scaleX(0.9170);transform-origin:0 0;--w:107px">Sync from METRC</span>
    <!-- card (page coords = screen-121) -->
    <div id="card" class="abs"></div>
<span class="t ttl fit" style="left:119px;top:185.200px;font-size:19.750px;font-weight:700;font-family:'DejaVu Sans',sans-serif;color:#1a1a1a;--sx:.97;transform:scaleX(0.9700);transform-origin:0 0;letter-spacing:-0.386px;--w:255px">Plant Batches in Cloning</span>
    <svg style="left:399px;top:182px" width="22" height="22" viewBox="0 0 22 22" fill="none" stroke="#06a94c" stroke-width="1.400"><path d="M3.500 2v3.500M3.500 10.500V20M11 2v9.800M11 16.800V20M18.500 2v4.500M18.500 11.500V20"/><circle cx="3.500" cy="8" r="2.500"/><circle cx="11" cy="14.300" r="2.500"/><circle cx="18.500" cy="9" r="2.500"/></svg>
    <svg style="left:435px;top:187px" width="18" height="18" viewBox="0 0 18 18" fill="none" stroke="#06a94c" stroke-width="2.800"><path d="M2 8.200A7 7 0 0 1 14.300 4.300"/><path d="M16 9.800A7 7 0 0 1 3.700 13.700"/><path d="M17.200 1v6.200H11z" fill="#06a94c" stroke="none"/><path d="M.8 17v-6.200H7z" fill="#06a94c" stroke="none"/></svg>
<span class="t  fit" style="left:480px;top:185px;font-size:15px;font-weight:700;color:#06a94c;letter-spacing:-0.172px;--w:44px">Active</span>
    <div class="abs" style="left:533.500px;top:192.500px;width:3.500px;height:3.500px;border-radius:50%;background:#a5a5a5"></div>
<span class="t  fit" style="left:542px;top:185px;font-size:15px;color:#8a8a8a;letter-spacing:0.443px;--w:18px">All</span>
<span class="t  fit" style="left:587px;top:186px;font-size:15px;font-weight:700;color:#222;letter-spacing:0.038px;--w:83px">(2 selected)</span>
<span class="t  fit" style="left:679px;top:188px;font-size:13px;color:#222;letter-spacing:-0.016px;--w:31px">Clear</span>
    <div class="abs" style="left:1447px;top:178px;width:110px;height:33px;border:1px solid #dcdcdc;border-radius:2px;background:#fff"></div>
    <svg style="left:1457px;top:188px" width="15" height="15" viewBox="0 0 15 15" fill="none" stroke="#06a94c" stroke-width="2"><circle cx="6.200" cy="6.200" r="4.900"/><path d="M9.800 9.800 13.600 13.600" stroke-linecap="round" stroke-width="2.300"/></svg>
<span class="t  fit" style="left:1481px;top:188px;font-size:13px;color:#8a8a8a;transform:scaleX(0.9708);transform-origin:0 0;--w:40px">Search</span>
    <svg style="left:1576px;top:184px" width="16" height="20" viewBox="0 0 16 20" fill="none" stroke="#8e8e8e" stroke-width="1.500"><path d="M.8 .8H10.500L15.200 5.500V19.200H.8z"/><path d="M10.500 .8V5.500H15.200" stroke-width="1.200"/><path d="M5 9.500l6 7.500M11 9.500l-6 7.500" stroke-width="1.600"/><path d="M6.500 14.500h3M7 12h2" stroke-width=".8"/></svg>
<span class="t  fit" style="left:1601px;top:185.900px;font-size:16px;color:#06a94c;transform:scaleX(0.9479);transform-origin:0 0;--w:102px">Export to Excel</span>
    <div class="abs" style="left:1720px;top:176px;width:100px;height:37px;background:#06a94c;border:1px solid #079a45;border-radius:2px;box-shadow:0 1px 2px rgba(0,0,0,.25)"></div>
<span class="t  fit" style="left:1734px;top:186px;font-size:16px;color:#fff;-webkit-text-stroke:.3px #fff;letter-spacing:-0.067px;--w:52px">Actions</span>
    <div class="abs" style="left:1795px;top:190.500px;width:0;height:0;border-left:4.500px solid transparent;border-right:4.500px solid transparent;border-top:7.500px solid #fff"></div>
    <div class="abs th" style="left:97px;width:133px"></div>
    <div class="abs th" style="left:230px;width:200px"></div>
    <div class="abs th" style="left:430px;width:200px"></div>
    <div class="abs th" style="left:630px;width:200px"></div>
    <div class="abs th" style="left:830px;width:200px"></div>
    <div class="abs th" style="left:1030px;width:200px"></div>
    <div class="abs th" style="left:1230px;width:200px"></div>
    <div class="abs th" style="left:1430px;width:200px"></div>
    <div class="abs th" style="left:1630px;width:216px"></div>
    <span class="t tht fit" style="left:114px;top:243.300px;transform:scaleX(0.9428);transform-origin:0 0;--w:84px">SYNC STATUS</span><svg style="left:203px;top:244.800px" width="13" height="14" viewBox="0 0 13 14"><path d="M0 0H13L7.600 5.800V12.300L5 13.800V5.800z" fill="#c4c4c4"/></svg>
    <span class="t tht fit" style="left:247px;top:243.300px;transform:scaleX(0.9320);transform-origin:0 0;--w:33px">AREA</span><svg style="left:403px;top:244.800px" width="13" height="14" viewBox="0 0 13 14"><path d="M0 0H13L7.600 5.800V12.300L5 13.800V5.800z" fill="#c4c4c4"/></svg>
    <span class="t tht fit" style="left:447px;top:243.300px;transform:scaleX(0.9020);transform-origin:0 0;--w:43px">GROUP</span><svg style="left:603px;top:244.800px" width="13" height="14" viewBox="0 0 13 14"><path d="M0 0H13L7.600 5.800V12.300L5 13.800V5.800z" fill="#c4c4c4"/></svg>
    <span class="t tht fit" style="left:647px;top:243.300px;transform:scaleX(0.9649);transform-origin:0 0;--w:46px">STRAIN</span><svg style="left:803px;top:244.800px" width="13" height="14" viewBox="0 0 13 14"><path d="M0 0H13L7.600 5.800V12.300L5 13.800V5.800z" fill="#c4c4c4"/></svg>
    <span class="t tht fit" style="left:847px;top:243.300px;transform:scaleX(0.9731);transform-origin:0 0;--w:86px">PLANT BATCH</span>
    <svg style="left:945px;top:246px" width="8" height="11" viewBox="0 0 8 11" fill="none" stroke="#f5113c" stroke-width="1.400"><path d="M4 11V1.500M1 4.500l3-3 3 3"/></svg>
    <span class="t tht fit" style="left:1047px;top:243.300px;transform:scaleX(0.9517);transform-origin:0 0;--w:44px">ORIGIN</span><svg style="left:1203px;top:244.800px" width="13" height="14" viewBox="0 0 13 14"><path d="M0 0H13L7.600 5.800V12.300L5 13.800V5.800z" fill="#c4c4c4"/></svg>
    <span class="t tht fit" style="left:1247px;top:243.300px;transform:scaleX(0.9634);transform-origin:0 0;--w:100px">TOTAL PLANTED</span>
    <span class="t tht fit" style="left:1447px;top:243.300px;transform:scaleX(0.9591);transform-origin:0 0;--w:97px">ACTIVE PLANTS</span>
    <div class="abs row sel" style="top:272px;height:82px"></div>
    <div class="abs row un" style="top:354px;height:41px"></div>
    <div class="abs" style="left:829px;top:354px;width:200px;height:41px;background:#efefef"></div>
    <div class="abs row sel" style="top:395px;height:61px"></div>
    <div class="abs row un" style="top:456px;height:41px"></div>
    <div class="abs" style="left:829px;top:456px;width:200px;height:41px;background:#efefef"></div>
    <svg style="left:153px;top:303px" width="19" height="19" viewBox="0 0 18 18"><circle cx="9" cy="9" r="9" fill="#06a94c"/><path d="M4.600 9.300l3 3 5.800-6" stroke="#fff" stroke-width="2.300" fill="none"/></svg>
    <span class="t c fit" style="left:242px;top:295px;letter-spacing:0.074px;--w:150px">Beginning Inventory Plant</span>
    <span class="t c fit" style="left:242px;top:317px;letter-spacing:-0.050px;--w:33px">Batch</span>
    <span class="t c g fit" style="left:442px;top:306px;letter-spacing:0.192px;--w:57px">MK12720</span>
    <span class="t c fit" style="left:642px;top:306px;letter-spacing:0.020px;--w:153px">Beginning Inventory Strain</span>
    <span class="t c fit" style="left:843px;top:306px;letter-spacing:-0.031px;--w:172px">1A4FF02000002590000000...</span>
    <div class="abs" style="left:1042.600px;top:280px;width:187.400px;height:66px;overflow:hidden"><span class="t c fit" style="left:0px;top:5px;letter-spacing:-0.113px;--w:192px">Plant 1A4FF02000002590000000</span><span class="t c fit" style="left:0px;top:26px;letter-spacing:-0.050px;--w:33px">Batch</span><span class="t c fit" style="left:0px;top:47px;letter-spacing:0.045px;--w:192px">Package1A4FF03000002590000</span></div>
    <span class="t c fit" style="left:1243px;top:306px;letter-spacing:-0.234px;--w:7px">8</span>
    <span class="t c fit" style="left:1443px;top:306px;letter-spacing:-0.234px;--w:7px">2</span>
    <svg style="left:153px;top:364.500px" width="19" height="19" viewBox="0 0 18 18"><circle cx="9" cy="9" r="9" fill="#f5113c"/><path d="M7.500 3.600h3l-.4 6.400H7.900z" fill="#fff"/><rect x="7.600" y="11.400" width="2.800" height="2.700" rx=".5" fill="#fff"/></svg>
    <span class="t c fit" style="left:242px;top:367px;letter-spacing:0.083px;--w:170px">Beginning Inventory Location</span>
    <span class="t c g fit" style="left:442px;top:367px;letter-spacing:0.211px;--w:81px">04/06/21 - Pri</span>
    <span class="t c fit" style="left:642px;top:367px;letter-spacing:0.020px;--w:153px">Beginning Inventory Strain</span>
    <span class="t c fit" style="left:843px;top:367px;letter-spacing:-0.031px;--w:172px">1A4FF02000002590000000...</span>
    <div class="abs" style="left:1042.600px;top:360px;width:187.400px;height:30px;overflow:hidden"><span class="t c fit" style="left:0px;top:7px;letter-spacing:0.141px;--w:188px">Plant1A4FF0200000259000004</span></div>
    <span class="t c fit" style="left:1243px;top:367px;letter-spacing:-0.234px;--w:7px">9</span>
    <span class="t c fit" style="left:1443px;top:367px;letter-spacing:-0.234px;--w:7px">9</span>
    <svg style="left:153px;top:416px" width="19" height="19" viewBox="0 0 18 18"><circle cx="9" cy="9" r="9" fill="#06a94c"/><path d="M4.600 9.300l3 3 5.800-6" stroke="#fff" stroke-width="2.300" fill="none"/></svg>
    <span class="t c fit" style="left:242px;top:418px;letter-spacing:0.217px;--w:72px">fsqa cloning</span>
    <span class="t c g fit" style="left:442px;top:418px;letter-spacing:0.097px;--w:143px">1715900056 - newgroup</span>
    <span class="t c fit" style="left:642px;top:418px;letter-spacing:0.020px;--w:153px">Beginning Inventory Strain</span>
    <span class="t c fit" style="left:843px;top:418px;letter-spacing:-0.031px;--w:172px">1A4FF02000002590000000...</span>
    <div class="abs" style="left:1042.600px;top:400px;width:187.400px;height:50px;overflow:hidden"><span class="t c fit" style="left:0px;top:8px;letter-spacing:-0.113px;--w:192px">Plant 1A4FF02000002590000000</span><span class="t c fit" style="left:0px;top:29px;letter-spacing:-0.050px;--w:33px">Batch</span></div>
    <span class="t c fit" style="left:1243px;top:418px;letter-spacing:-0.234px;--w:7px">1</span>
    <span class="t c fit" style="left:1443px;top:418px;letter-spacing:-0.234px;--w:7px">1</span>
    <svg style="left:153px;top:465px" width="19" height="19" viewBox="0 0 18 18"><circle cx="9" cy="9" r="9" fill="#06a94c"/><path d="M4.600 9.300l3 3 5.800-6" stroke="#fff" stroke-width="2.300" fill="none"/></svg>
    <span class="t c fit" style="left:242px;top:468px;letter-spacing:0.200px;--w:62px">Location 2</span>
    <span class="t c g fit" style="left:442px;top:468px;transform:scaleX(0.9719);transform-origin:0 0;--w:59px">ANEW142</span>
    <span class="t c fit" style="left:642px;top:468px;letter-spacing:0.089px;--w:110px">Test Strain 121020</span>
    <span class="t c fit" style="left:843px;top:468px;letter-spacing:-0.031px;--w:172px">1A4FF02000002590000000...</span>
    <div class="abs" style="left:1042.600px;top:460px;width:187.400px;height:30px;overflow:hidden"><span class="t c fit" style="left:0px;top:8px;letter-spacing:0.141px;--w:188px">Plant1A4FF0200000259000000</span></div>
    <span class="t c fit" style="left:1243px;top:468px;letter-spacing:-0.234px;--w:7px">1</span>
    <span class="t c fit" style="left:1443px;top:468px;letter-spacing:-0.234px;--w:7px">1</span>
    <div class="abs" style="left:1640px;top:214px;width:264px;height:280px;background:#fff;box-shadow:0 2px 20px rgba(0,0,0,.2),0 0 2px rgba(0,0,0,.12)"></div>
    <div class="abs" style="left:1640px;top:320px;width:264px;height:52px;background:#e8e8e8"></div>
    <div class="abs" style="left:1649px;top:324px;width:220px;height:44px;background:#f1f1f1"></div>
    <span class="t mi fit" style="left:1704px;top:232px;transform:scaleX(0.9225);transform-origin:0 0;--w:61px">Retry sync</span>
    <span class="t mi fit" style="left:1704px;top:285px;transform:scaleX(0.9413);transform-origin:0 0;--w:85px">Update counts</span>
    <span class="t mi g fit" style="left:1704px;top:337px;transform:scaleX(0.9472);transform-origin:0 0;--w:115px">Move plant batches</span>
    <span class="t mi fit" style="left:1704px;top:390px;transform:scaleX(0.9292);transform-origin:0 0;--w:81px">Change strain</span>
    <span class="t mi fit" style="left:1704px;top:443px;transform:scaleX(0.9300);transform-origin:0 0;--w:76px">Replace tags</span>
    <svg style="left:1663px;top:229.500px" width="29" height="23" viewBox="0 0 29 23" fill="none" stroke="#505050" stroke-width="2" stroke-linecap="round" stroke-linejoin="round"><path d="M13.500 19.500H6.500A5.200 5.200 0 0 1 5.800 9.200 7.300 7.300 0 0 1 20 8"/><path d="M17.400 13.800a4.500 4.500 0 0 1 7.800-1.800M26 15.800a4.500 4.500 0 0 1-7.800 1.800" stroke-width="2.200"/><path d="M26.200 8.600v4h-4M17.200 21.200v-4h4" stroke-width="1.800"/></svg>
    <svg style="left:1667px;top:280px" width="19" height="28" viewBox="0 0 19 28" fill="none" stroke="#555" stroke-width="1" stroke-linecap="round"><path d="M9.500 1c1.700 0 2.900 1 3.300 2.300 1.500-.3 3 .5 3.600 1.900.6 1.400.2 2.800-.8 3.700 1 .9 1.400 2.400.8 3.700-.6 1.400-2.100 2.200-3.600 1.900-.4 1.300-1.600 2.300-3.300 2.300s-2.900-1-3.300-2.300c-1.500.3-3-.5-3.600-1.900-.6-1.300-.2-2.800.8-3.700-1-.9-1.400-2.300-.8-3.700.6-1.400 2.100-2.200 3.600-1.900C6.600 2 7.800 1 9.500 1z"/><path d="M6 6.500l2 2M8 6.500l-2 2M11 6.500l2 2M13 6.500l-2 2M7 11.500h5"/><path d="M9.500 17v10.500M9.500 24c-3.500 0-5.500-1.500-5.500-4 3 0 5.500 1.500 5.500 4zM9.500 24c3.500 0 5.500-1.500 5.500-4-3 0-5.500 1.500-5.500 4z"/></svg>
    <svg style="left:1664px;top:334.500px" width="23" height="23" viewBox="0 0 23 23"><path d="M11.500 0l4.600 5.200h-2.900v4.600h4.600V6.900l5.200 4.600-5.200 4.600v-2.900h-4.600v4.600h2.900l-4.600 5.200-4.600-5.200h2.900v-4.600H5.200v2.900L0 11.500l5.200-4.600v2.900h4.600V5.200H6.900z" fill="#06a94c"/></svg>
    <svg style="left:1662.500px;top:388px" width="29" height="28" viewBox="0 0 29 28" fill="none" stroke="#666" stroke-width="1.150"><ellipse cx="10.500" cy="4.200" rx="9.500" ry="3.500"/><path d="M1 4.200v16.300c0 1.900 4.200 3.500 9.500 3.500 1.600 0 3.200-.2 4.600-.5M20 4.200v9"/><path d="M1 9.800c0 1.900 4.200 3.500 9.500 3.500s9.500-1.600 9.500-3.500M1 15.200c0 1.900 4.200 3.500 9.500 3.500 1.400 0 2.700-.1 3.900-.3"/><circle cx="21.500" cy="20.500" r="6.300" fill="#fff" stroke-width="1.400"/><path d="M18.600 19.600a3.100 3.100 0 0 1 5.400-1M24.400 21.400a3.100 3.100 0 0 1-5.400 1" stroke-width="1.300"/><path d="M24.500 16.800v2.200h-2.200M18.500 24.200V22h2.200" stroke-width="1.100"/></svg>
    <svg style="left:1662.500px;top:438.500px" width="28" height="30" viewBox="0 0 29 31" fill="none" stroke="#555" stroke-width="1.900" stroke-linejoin="round"><path d="M1.500 1.500h10.200l15.300 15.800-10.200 11.700L1.500 13.200z"/><path d="M1.500 1.500h10.200l2 2.100-9.600 10.900-2.600-2.700z" fill="#555" stroke="none"/><circle cx="6.500" cy="6.800" r="1.900" fill="#fff" stroke="none"/><path d="M12 13.500l7.500 7.500M14.500 11.500l7 7M10 16l6.500 6.500" stroke-width="1.100"/></svg>
  </div>
</div>
</body>
</html>
